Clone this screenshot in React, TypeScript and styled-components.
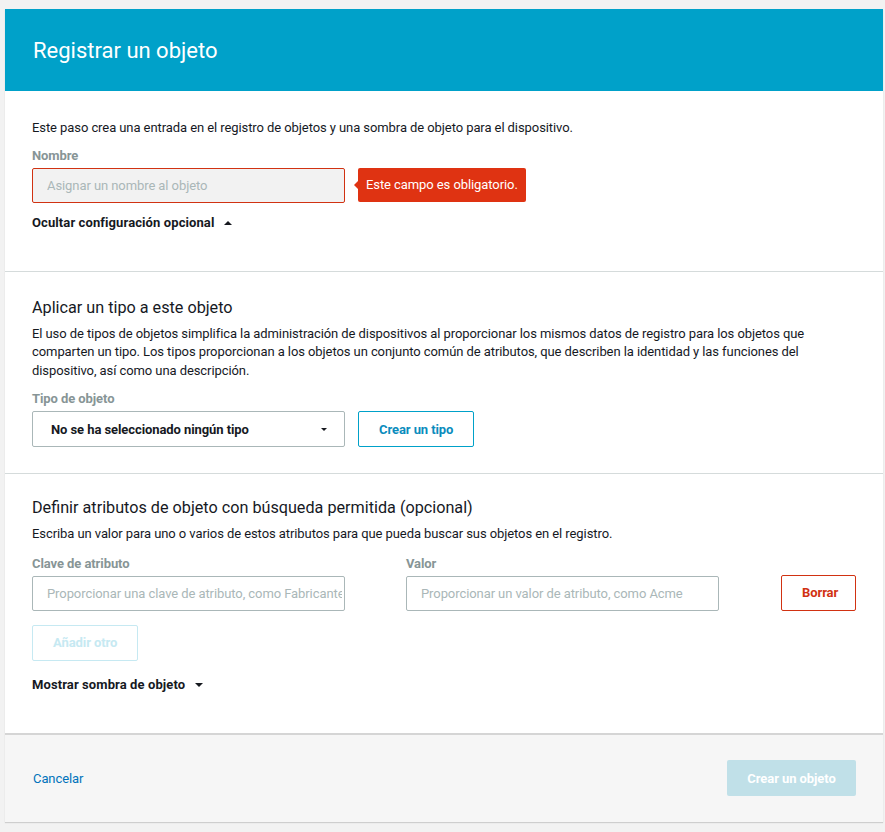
import React from "react";
import styled, { createGlobalStyle } from "styled-components";

const Global = createGlobalStyle`
  html, body { margin: 0; padding: 0; }
  body {
    background: #f2f2f2;
    font-family: Roboto, "Liberation Sans", sans-serif;
    color: #16191f;
    letter-spacing: -0.08px;
  }
  * { box-sizing: border-box; }
`;

const Page = styled.div`
  padding: 9px 2px 10px 5px;
`;

const Card = styled.div`
  width: 878px;
  background: #fff;
  box-shadow: 0 1px 1px rgba(0, 0, 0, 0.15);
`;

const Header = styled.div`
  height: 82px;
  background: #00a1c9;
  display: flex;
  align-items: center;
  padding: 0 28px;
`;

const Title = styled.h1`
  margin: 0;
  font-size: 22px;
  font-weight: 400;
  color: #fff;
  letter-spacing: 0;
`;

const Section = styled.section<{ $top: number; $bottom: number; $divider?: boolean }>`
  padding: ${(p) => p.$top}px 27px ${(p) => p.$bottom}px 27px;
  border-top: ${(p) => (p.$divider ? "1px solid #d5dbdb" : "none")};
  display: flex;
  flex-direction: column;
`;

const Heading = styled.h2`
  margin: 0 0 6px;
  font-size: 16.2px;
  font-weight: 400;
  line-height: 22px;
  letter-spacing: 0;
`;

const Text = styled.p`
  margin: 0;
  font-size: 13px;
  line-height: 18.5px;
`;

const Label = styled.label`
  display: block;
  font-size: 13px;
  font-weight: 700;
  color: #879596;
  line-height: 18px;
  margin-bottom: 3px;
`;

const Row = styled.div`
  display: flex;
  align-items: stretch;
  gap: 13px;
`;

const Input = styled.input<{ $error?: boolean }>`
  width: 313px;
  height: 35px;
  padding: 0 2px 0 14px;
  font-family: inherit;
  font-size: 13px;
  letter-spacing: -0.08px;
  border: 1px solid ${(p) => (p.$error ? "#d13212" : "#aab7b8")};
  border-radius: 2px;
  background: ${(p) => (p.$error ? "#f2f2f2" : "#fff")};
  color: #16191f;
  outline: none;
  &::placeholder { color: #aab7b8; }
`;

const Tooltip = styled.div`
  position: relative;
  height: 34px;
  display: flex;
  align-items: center;
  padding: 0 8px;
  background: #df3312;
  color: #fff;
  font-size: 13px;
  border-radius: 2px;
  &::before {
    content: "";
    position: absolute;
    left: -4px;
    top: 50%;
    margin-top: -4px;
    border-top: 4px solid transparent;
    border-bottom: 4px solid transparent;
    border-right: 4px solid #df3312;
  }
`;

const Toggle = styled.div`
  display: flex;
  align-items: center;
  gap: 10px;
  font-size: 13px;
  font-weight: 700;
  letter-spacing: 0.1px;
  color: #16191f;
  line-height: 18px;
`;

const Caret = styled.span<{ $up?: boolean }>`
  width: 0;
  height: 0;
  border-left: 4px solid transparent;
  border-right: 4px solid transparent;
  ${(p) =>
    p.$up
      ? "border-bottom: 4px solid #16191f;"
      : "border-top: 4px solid #16191f;"}
`;

const Select = styled.div`
  width: 313px;
  height: 36px;
  border: 1px solid #aab7b8;
  border-radius: 2px;
  display: flex;
  align-items: center;
  justify-content: space-between;
  padding: 0 17px 0 18px;
  font-size: 13px;
  font-weight: 700;
`;

const SmallCaret = styled.span`
  width: 0;
  height: 0;
  border-left: 3px solid transparent;
  border-right: 3px solid transparent;
  border-top: 3px solid #16191f;
`;

const Button = styled.button<{ $tone: "primary" | "danger" | "disabled" }>`
  height: 36px;
  padding: 0 20px;
  font-family: inherit;
  font-size: 13px;
  font-weight: 700;
  letter-spacing: -0.08px;
  background: #fff;
  border-radius: 2px;
  border: 1px solid
    ${(p) =>
      p.$tone === "primary" ? "#00a1c9" : p.$tone === "danger" ? "#d13212" : "#c6e9f2"};
  color: ${(p) =>
    p.$tone === "primary" ? "#0a8cbd" : p.$tone === "danger" ? "#d13212" : "#c6e9f2"};
`;

const AttrGrid = styled.div`
  display: grid;
  grid-template-columns: 313px 314px 75px;
  column-gap: 61px;
  align-items: end;
`;

const Footer = styled.div`
  height: 89px;
  border-top: 2px solid #d5d5d5;
  background: #f6f6f6;
  display: flex;
  align-items: center;
  justify-content: space-between;
  padding: 0 27px 0 28px;
`;

const Link = styled.a`
  font-size: 13px;
  color: #0073bb;
  text-decoration: none;
`;

const PrimaryButton = styled.button`
  width: 129px;
  height: 36px;
  border: none;
  border-radius: 2px;
  background: #c0e0e8;
  color: #fff;
  font-family: inherit;
  font-size: 13px;
  font-weight: 700;
  letter-spacing: -0.08px;
`;

const Spacer = styled.div<{ $h: number }>`
  height: ${(p) => p.$h}px;
`;

export default function App() {
  return (
    <>
      <Global />
      <Page>
        <Card>
          <Header>
            <Title>Registrar un objeto</Title>
          </Header>
          <Section $top={28} $bottom={39}>
            <Text>
              Este paso crea una entrada en el registro de objetos y una sombra de objeto para el
              dispositivo.
            </Text>
            <Spacer $h={9} />
            <Label>Nombre</Label>
            <Row>
              <Input $error placeholder="Asignar un nombre al objeto" />
              <Tooltip>Este campo es obligatorio.</Tooltip>
            </Row>
            <Spacer $h={11} />
            <Toggle>
              Ocultar configuración opcional <Caret $up />
            </Toggle>
          </Section>
          <Section $divider $top={25} $bottom={26}>
            <Heading>Aplicar un tipo a este objeto</Heading>
            <Text>
              El uso de tipos de objetos simplifica la administración de dispositivos al
              proporcionar los mismos datos de registro para los objetos que comparten un tipo. Los
              tipos proporcionan a los objetos un conjunto común de atributos, que describen la
              identidad y las funciones del dispositivo, así como una descripción.
            </Text>
            <Spacer $h={10} />
            <Label>Tipo de objeto</Label>
            <Row>
              <Select>
                No se ha seleccionado ningún tipo <SmallCaret />
              </Select>
              <Button $tone="primary">Crear un tipo</Button>
            </Row>
          </Section>
          <Section $divider $top={23} $bottom={39}>
            <Heading>Definir atributos de objeto con búsqueda permitida (opcional)</Heading>
            <Text>
              Escriba un valor para uno o varios de estos atributos para que pueda buscar sus
              objetos en el registro.
            </Text>
            <Spacer $h={11} />
            <AttrGrid>
              <div>
                <Label>Clave de atributo</Label>
                <Input placeholder="Proporcionar una clave de atributo, como Fabricante" />
              </div>
              <div>
                <Label>Valor</Label>
                <Input placeholder="Proporcionar un valor de atributo, como Acme" />
              </div>
              <Button $tone="danger">Borrar</Button>
            </AttrGrid>
            <Spacer $h={14} />
            <Row>
              <Button $tone="disabled">Añadir otro</Button>
            </Row>
            <Spacer $h={15} />
            <Toggle>
              Mostrar sombra de objeto <Caret />
            </Toggle>
          </Section>
          <Footer>
            <Link href="#">Cancelar</Link>
            <PrimaryButton>Crear un objeto</PrimaryButton>
          </Footer>
        </Card>
      </Page>
    </>
  );
}
